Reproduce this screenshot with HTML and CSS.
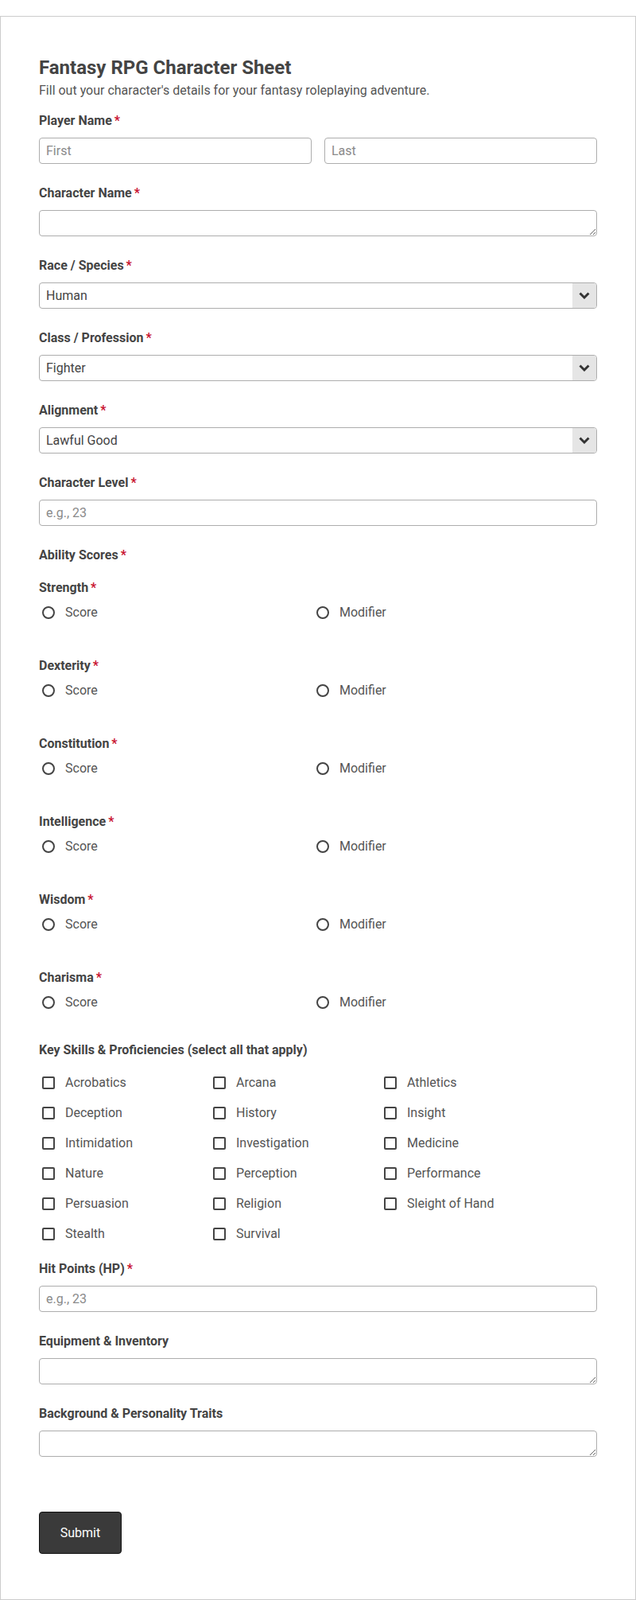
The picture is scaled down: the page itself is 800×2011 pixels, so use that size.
FILE: index.html
```html
<!DOCTYPE html>
<html lang="en">
<head>
    <meta charset="UTF-8">
    <meta name="viewport" content="width=device-width, initial-scale=1.0">
    <title>Fantasy RPG Character Sheet</title>
    <link rel="stylesheet" href="styles.css">
</head>
<body>
    <form class="sheet" onsubmit="return false">
        <h1 class="sheet-title">Fantasy RPG Character Sheet</h1>
        <p class="sheet-desc">Fill out your character's details for your fantasy roleplaying adventure.</p>

        <div class="field">
            <label class="field-label">Player Name<span class="req">*</span></label>
            <div class="name-row">
                <input type="text" class="text-input" placeholder="First">
                <input type="text" class="text-input" placeholder="Last">
            </div>
        </div>

        <div class="field">
            <label class="field-label">Character Name<span class="req">*</span></label>
            <textarea class="text-area"></textarea>
        </div>

        <div class="field">
            <label class="field-label">Race / Species<span class="req">*</span></label>
            <div class="select-wrap">
                <select class="select-input">
                    <option>Human</option>
                    <option>Elf</option>
                    <option>Dwarf</option>
                    <option>Halfling</option>
                    <option>Orc</option>
                </select>
                <span class="select-arrow"><svg width="14" height="9" viewBox="0 0 14 9"><path d="M1.5 1.5 L7 7 L12.5 1.5" fill="none" stroke="#333" stroke-width="2.9"/></svg></span>
            </div>
        </div>

        <div class="field">
            <label class="field-label">Class / Profession<span class="req">*</span></label>
            <div class="select-wrap">
                <select class="select-input">
                    <option>Fighter</option>
                    <option>Wizard</option>
                    <option>Rogue</option>
                    <option>Cleric</option>
                    <option>Ranger</option>
                </select>
                <span class="select-arrow"><svg width="14" height="9" viewBox="0 0 14 9"><path d="M1.5 1.5 L7 7 L12.5 1.5" fill="none" stroke="#333" stroke-width="2.9"/></svg></span>
            </div>
        </div>

        <div class="field">
            <label class="field-label">Alignment<span class="req">*</span></label>
            <div class="select-wrap">
                <select class="select-input">
                    <option>Lawful Good</option>
                    <option>Neutral Good</option>
                    <option>Chaotic Good</option>
                    <option>True Neutral</option>
                    <option>Chaotic Evil</option>
                </select>
                <span class="select-arrow"><svg width="14" height="9" viewBox="0 0 14 9"><path d="M1.5 1.5 L7 7 L12.5 1.5" fill="none" stroke="#333" stroke-width="2.9"/></svg></span>
            </div>
        </div>

        <div class="field">
            <label class="field-label">Character Level<span class="req">*</span></label>
            <input type="number" class="text-input" placeholder="e.g., 23">
        </div>

        <div class="field abilities">
            <label class="field-label group-label">Ability Scores<span class="req">*</span></label>

            <div class="ability">
                <label class="field-label">Strength<span class="req">*</span></label>
                <div class="radios">
                    <label class="choice"><input type="radio" name="str"> Score</label>
                    <label class="choice"><input type="radio" name="str"> Modifier</label>
                </div>
            </div>
            <div class="ability">
                <label class="field-label">Dexterity<span class="req">*</span></label>
                <div class="radios">
                    <label class="choice"><input type="radio" name="dex"> Score</label>
                    <label class="choice"><input type="radio" name="dex"> Modifier</label>
                </div>
            </div>
            <div class="ability">
                <label class="field-label">Constitution<span class="req">*</span></label>
                <div class="radios">
                    <label class="choice"><input type="radio" name="con"> Score</label>
                    <label class="choice"><input type="radio" name="con"> Modifier</label>
                </div>
            </div>
            <div class="ability">
                <label class="field-label">Intelligence<span class="req">*</span></label>
                <div class="radios">
                    <label class="choice"><input type="radio" name="int"> Score</label>
                    <label class="choice"><input type="radio" name="int"> Modifier</label>
                </div>
            </div>
            <div class="ability">
                <label class="field-label">Wisdom<span class="req">*</span></label>
                <div class="radios">
                    <label class="choice"><input type="radio" name="wis"> Score</label>
                    <label class="choice"><input type="radio" name="wis"> Modifier</label>
                </div>
            </div>
            <div class="ability">
                <label class="field-label">Charisma<span class="req">*</span></label>
                <div class="radios">
                    <label class="choice"><input type="radio" name="cha"> Score</label>
                    <label class="choice"><input type="radio" name="cha"> Modifier</label>
                </div>
            </div>
        </div>

        <div class="field skills">
            <label class="field-label group-label">Key Skills &amp; Proficiencies (select all that apply)</label>
            <div class="checks">
                <label class="choice"><input type="checkbox"> Acrobatics</label>
                <label class="choice"><input type="checkbox"> Arcana</label>
                <label class="choice"><input type="checkbox"> Athletics</label>
                <label class="choice"><input type="checkbox"> Deception</label>
                <label class="choice"><input type="checkbox"> History</label>
                <label class="choice"><input type="checkbox"> Insight</label>
                <label class="choice"><input type="checkbox"> Intimidation</label>
                <label class="choice"><input type="checkbox"> Investigation</label>
                <label class="choice"><input type="checkbox"> Medicine</label>
                <label class="choice"><input type="checkbox"> Nature</label>
                <label class="choice"><input type="checkbox"> Perception</label>
                <label class="choice"><input type="checkbox"> Performance</label>
                <label class="choice"><input type="checkbox"> Persuasion</label>
                <label class="choice"><input type="checkbox"> Religion</label>
                <label class="choice"><input type="checkbox"> Sleight of Hand</label>
                <label class="choice"><input type="checkbox"> Stealth</label>
                <label class="choice"><input type="checkbox"> Survival</label>
            </div>
        </div>

        <div class="field">
            <label class="field-label">Hit Points (HP)<span class="req">*</span></label>
            <input type="number" class="text-input" placeholder="e.g., 23">
        </div>

        <div class="field">
            <label class="field-label">Equipment &amp; Inventory</label>
            <textarea class="text-area"></textarea>
        </div>

        <div class="field">
            <label class="field-label">Background &amp; Personality Traits</label>
            <textarea class="text-area"></textarea>
        </div>

        <button type="submit" class="submit-btn">Submit</button>
    </form>
</body>
</html>
```

FILE: styles.css
```css
body {
    margin: 0;
    padding-top: 20px;
    font-family: Roboto, 'Noto Sans', sans-serif;
    color: #444;
    background: #fff;
}

.sheet {
    border: 1px solid #ccc;
    padding: 50px 48px 57px;
}

.sheet-title {
    font-size: 24px;
    font-weight: 700;
    line-height: normal;
    margin: 0 0 5px;
    color: #444;
}

.sheet-desc {
    font-size: 16px;
    line-height: normal;
    margin: 0 0 19px;
    color: #555;
}

.field {
    margin-bottom: 27px;
}

.field-label {
    display: block;
    font-size: 16px;
    font-weight: 700;
    line-height: 19px;
    margin-bottom: 12px;
    color: #444;
}

.group-label {
    margin-bottom: 22px;
}

.req {
    color: #c8102e;
    margin-left: 3px;
}

.name-row {
    display: grid;
    grid-template-columns: 1fr 1fr;
    gap: 16px;
}

.text-input, .text-area, .select-input {
    display: block;
    box-sizing: border-box;
    width: 100%;
    height: 33px;
    margin: 0;
    padding: 0 8px;
    border: 1px solid #adadad;
    border-radius: 4px;
    background: #fff;
    font-family: Roboto, 'Noto Sans', sans-serif;
    font-size: 16px;
    color: #444;
}

.text-input::placeholder {
    color: #8a8a8a;
}

.text-input::-webkit-inner-spin-button,
.text-input::-webkit-outer-spin-button {
    -webkit-appearance: none;
    margin: 0;
}

.text-area {
    padding: 6px 8px;
    resize: vertical;
}

.select-wrap {
    position: relative;
}

.select-input {
    -webkit-appearance: none;
    appearance: none;
    padding-right: 40px;
}

.select-arrow {
    position: absolute;
    top: 1px;
    right: 1px;
    bottom: 1px;
    width: 30px;
    background: #e5e5e5;
    border-radius: 0 3px 3px 0;
    display: flex;
    align-items: center;
    justify-content: center;
    pointer-events: none;
}

.abilities {
    margin-bottom: 41px;
}

.ability {
    margin-bottom: 48px;
}

.ability:last-child {
    margin-bottom: 0;
}

.radios {
    display: grid;
    grid-template-columns: 345px 1fr;
}

.skills {
    margin-bottom: 25px;
}

.checks {
    display: grid;
    grid-template-columns: repeat(3, 215px);
    row-gap: 19px;
}

.choice {
    display: flex;
    align-items: center;
    gap: 13px;
    font-size: 16px;
    line-height: 19px;
    color: #555;
}

.choice input {
    -webkit-appearance: none;
    appearance: none;
    box-sizing: border-box;
    width: 16px;
    height: 16px;
    margin: 0 0 0 4px;
    border: 2px solid #444;
    background: #fff;
}

.choice input[type="radio"] {
    border-radius: 50%;
}

.choice input[type="checkbox"] {
    border-radius: 2px;
}

.choice input:checked {
    background: #444;
    box-shadow: inset 0 0 0 2px #fff;
}

.submit-btn {
    display: block;
    margin-top: 69px;
    width: 104px;
    height: 53px;
    background: #3a3a3a;
    color: #fff;
    border: 1px solid #111;
    border-radius: 4px;
    font-family: Roboto, 'Noto Sans', sans-serif;
    font-size: 16px;
    cursor: pointer;
}

.submit-btn:hover {
    background: #222;
}
```
